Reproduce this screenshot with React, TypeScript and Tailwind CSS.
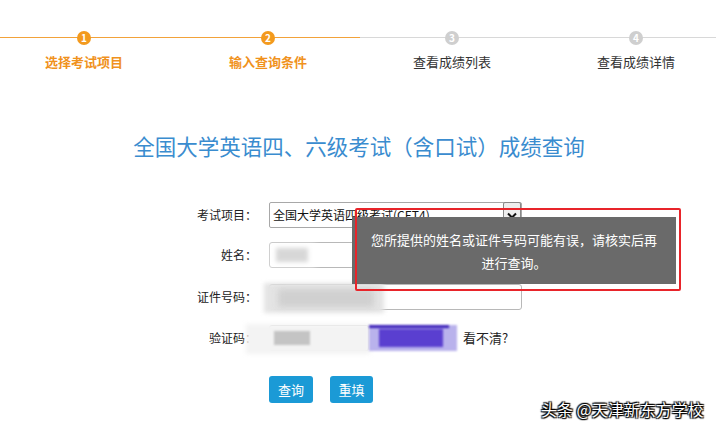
import React from "react";

const font = { fontFamily: '"Noto Sans CJK SC", "Noto Sans", sans-serif' };

function Step({ n, label, active }: { n: number; label: string; active: boolean }) {
  return (
    <div className="relative flex w-[184px] shrink-0 flex-col items-center">
      <div className={`absolute left-0 right-0 top-[37px] h-[1px] ${active ? "bg-[#f2a23a]" : "bg-[#d8d8d8]"}`} />
      <div
        className={`relative mt-[31px] flex h-[14px] w-[14px] items-center justify-center rounded-full text-[10px] font-bold leading-none text-white ${
          active ? "bg-[#f39a1e]" : "bg-[#cfcfcf]"
        }`}
      >
        {n}
      </div>
      <div className={`mt-[9px] text-[13px] leading-[16px] ${active ? "font-bold text-[#f0921d]" : "text-[#333]"}`}>{label}</div>
    </div>
  );
}

function Row({ label, children, className = "" }: { label: string; children: React.ReactNode; className?: string }) {
  return (
    <div className={`flex items-center ${className}`}>
      <div className="w-[257px] text-right text-[12px] text-[#222]">{label}</div>
      <div className="ml-[12px] flex items-center">{children}</div>
    </div>
  );
}

export default function App() {
  return (
    <div className="relative h-[429px] w-[716px] overflow-hidden bg-white" style={font}>
      <div className="flex ml-[-8px]">
        <Step n={1} label="选择考试项目" active />
        <Step n={2} label="输入查询条件" active />
        <Step n={3} label="查看成绩列表" active={false} />
        <Step n={4} label="查看成绩详情" active={false} />
      </div>

      <div className="mt-[62px] pl-[2px] text-center text-[21.5px] leading-[28px] text-[#3a8ccf]">全国大学英语四、六级考试（含口试）成绩查询</div>

      <div className="mt-[42px] flex flex-col">
        <Row label="考试项目：">
          <div className="flex h-[26px] w-[253px] items-center justify-between rounded-[2px] border border-[#a8a8a8] bg-white pl-[3px]">
            <span className="text-[12px] text-[#111]">全国大学英语四级考试(CET4)</span>
            <div className="flex h-[26px] w-[18px] items-center justify-center rounded-[2px] border border-[#888] bg-[#eee]">
              <svg width="10" height="7" viewBox="0 0 10 7"><path d="M1 1.5 L5 5.5 L9 1.5" stroke="#111" strokeWidth="2" fill="none" /></svg>
            </div>
          </div>
        </Row>
        <Row label="姓名：" className="mt-[14px]">
          <div className="relative h-[26px] w-[252px] rounded-[3px] border border-[#b8b8b8] bg-white">
            <div className="absolute left-[6px] top-[5px] h-[14px] w-[32px] bg-[#bdbdbd] blur-[2px]" />
            <div className="absolute left-[-4px] top-[-2px] h-[30px] w-[50px] bg-white/40 blur-[3px]" />
          </div>
        </Row>
        <Row label="证件号码：" className="mt-[16px]">
          <div className="relative h-[26px] w-[253px] rounded-[3px] border border-[#b8b8b8] bg-white">
            <div className="absolute left-[-6px] top-[-2px] h-[30px] w-[120px] bg-[#e4e4e4] blur-[2px]" />
            <div className="absolute left-[8px] top-[4px] h-[18px] w-[96px] bg-[#d0d0d0] blur-[3px]" />
          </div>
        </Row>
        <Row label="验证码：" className="mt-[15px]">
          <div className="relative h-[26px] w-[100px] rounded-[3px] border border-[#ccc] bg-white">
            <div className="absolute left-[-24px] top-[-2px] h-[30px] w-[124px] bg-[#f3f3f3] blur-[2px]" />
            <div className="absolute left-[4px] top-[5px] h-[14px] w-[36px] bg-[#c4c4c4] blur-[1px]" />
          </div>
          <div className="relative h-[26px] w-[88px] bg-[#b9b2ec] blur-[1px]">
            <div className="absolute left-[10px] top-[4px] h-[18px] w-[64px] bg-[#5a3fd0]" />
            <div className="absolute left-[0px] top-[0px] h-[3px] w-[80px] bg-[#3a1fb8]" />
          </div>
          <span className="ml-[6px] text-[13px] text-[#222]">看不清?</span>
        </Row>
        <div className="ml-[269px] mt-[25px] flex gap-[17px]">
          <button className="h-[27px] w-[44px] rounded-[3px] bg-[#1b9ad6] text-[13px] text-white">查询</button>
          <button className="h-[27px] w-[43px] rounded-[3px] bg-[#1b9ad6] text-[13px] text-white">重填</button>
        </div>
      </div>

      <div className="absolute left-[352px] top-[217px] flex h-[67px] w-[324px] flex-col items-center justify-center bg-[#6a6a6a] text-[13px] leading-[23px] text-white">
        <div>您所提供的姓名或证件号码可能有误，请核实后再</div>
        <div>进行查询。</div>
      </div>
      <div className="absolute left-[355px] top-[208px] h-[83px] w-[326px] rounded-[2px] border-2 border-[#e8242a]" />

      <div
        className="absolute left-[541px] top-[397px] text-[16px] leading-[24px] text-white"
        style={{ textShadow: "0 0 2px #000, 1px 1px 1px #000, -1px -1px 1px #000, 1px -1px 1px #000, -1px 1px 1px #000" }}
      >
        头条 @天津新东方学校
      </div>
    </div>
  );
}
